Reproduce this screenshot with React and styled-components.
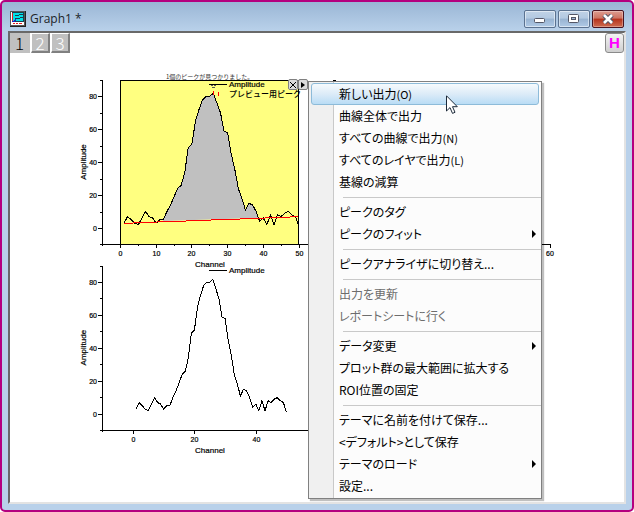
import React from 'react';
import styled, { createGlobalStyle, css } from 'styled-components';

const counts = [
    3, 7, 5, 3, 2, 6, 10, 7, 6, 3, 5, 5, 10, 14, 19, 24, 26, 34, 49, 51,
    65, 72, 78, 80, 80, 82, 76, 70, 59, 58, 45, 36, 24, 18, 11, 15, 14, 10, 4, 6,
    2, 8, 2, 8, 7, 9, 10, 8, 7, 1
];

const menuGroups = [
    [
        { label: '新しい出力', hotkey: 'O', active: true },
        { label: '曲線全体で出力' },
        { label: 'すべての曲線で出力', hotkey: 'N' },
        { label: 'すべてのレイヤで出力', hotkey: 'L' },
        { label: '基線の減算' }
    ],
    [
        { label: 'ピークのタグ' },
        { label: 'ピークのフィット', submenu: true }
    ],
    [{ label: 'ピークアナライザに切り替え...' }],
    [
        { label: '出力を更新', disabled: true },
        { label: 'レポートシートに行く', disabled: true }
    ],
    [
        { label: 'データ変更', submenu: true },
        { label: 'プロット群の最大範囲に拡大する' },
        { label: 'ROI位置の固定' }
    ],
    [
        { label: 'テーマに名前を付けて保存...' },
        { label: '<デフォルト>として保存' },
        { label: 'テーマのロード', submenu: true },
        { label: '設定...' }
    ]
];

const yTicks = [-10, 0, 10, 20, 30, 40, 50, 60, 70, 80, 90];

const Axes = ({ x0, y0, xStep, right, xTicks }) => {
    const bottom = Math.round(y0 + 16.4);
    const top = Math.round(y0 - 9 * 16.45);
    return (
        <g>
            <Stroke d={`M102.5 ${top}V${bottom + 0.5}M102 ${bottom + 0.5}H${right}`} />
            {yTicks.map(v => {
                const y = Math.round(y0 - v * 1.645) + 0.5;
                const major = v % 20 === 0;
                return (
                    <g key={v}>
                        <Stroke d={`M${major ? 98 : 100} ${y}H102`} />
                        {major && <TickText x="97" y={y + 2} textAnchor="end">{v}</TickText>}
                    </g>
                );
            })}
            {xTicks.map(([v, label]) => {
                const x = Math.round(x0 + v * xStep) + 0.5;
                return (
                    <g key={v}>
                        <Stroke d={`M${x} ${bottom}v${label ? 4 : 2}`} />
                        {label && <TickText x={x} y={bottom + 12} textAnchor="middle">{v}</TickText>}
                    </g>
                );
            })}
            <PlotText x="210" y={y0 + 39} textAnchor="middle">Channel</PlotText>
            <PlotText textAnchor="middle" transform={`translate(86 ${y0 - 66}) rotate(-90)`}>Amplitude</PlotText>
        </g>
    );
};

const Plots = () => {
    const curve = (x0, y0, xStep) =>
        counts.map((v, i) => `${(x0 + (i + 1) * xStep).toFixed(1)},${(y0 - v * 1.645).toFixed(1)}`);
    const upper = curve(120.5, 228, 3.57);
    const lower = curve(133, 414, 3.07);

    return (
        <PlotArea viewBox="10 53 612 440" role="img" aria-label="Amplitude / Channel">
            <rect x="120" y="80" width="179" height="164" fill="#ffff80" />
            <polygon points={`163,221 ${upper.slice(11, 39).join(' ')} 259,218`} fill="#c0c0c0" />
            <Stroke d="M120.5 244V80.5H298.5V244" />
            <Curve points={upper.join(' ')} />
            <Stroke $color="#ff0000" d="M124 223.5H133M133 222.5H157M157 221.5H186M186 220.5H211M211 219.5H240M240 218.5H265M265 217.5H290M290 216.5H298" />
            <Axes
                x0={120} y0={228} xStep={3.57} right={308}
                xTicks={[[-5], [0, 1], [5], [10, 1], [15], [20, 1], [25], [30, 1], [35], [40, 1], [45], [50, 1]]}
            />
            <Stroke d="M541 244.5H551M550.5 244V248M333 80.5H336" />
            <TickText x="550" y="256" textAnchor="middle">60</TickText>
            <NoteText x="166" y="79">1個のピークが見つかりました。</NoteText>
            <Stroke d="M209 84.5H227" />
            <PlotText x="229" y="87">Amplitude</PlotText>
            <Stroke $color="#555555" d="M211 85.5H213M214 85.5H216M212 87.5H215" />
            <Stroke $color="#ff0000" d="M213.5 91V95M218.5 92V96" />
            <LegendText x="229" y="97">プレビュー用ピーク</LegendText>

            <Curve points={lower.join(' ')} />
            <Axes
                x0={133} y0={413.6} xStep={3.07} right={308}
                xTicks={[[-10], [0, 1], [20, 1], [40, 1]]}
            />
            <Stroke d="M209 270.5H227" />
            <PlotText x="229" y="273">Amplitude</PlotText>
        </PlotArea>
    );
};

const ContextMenu = () => (
    <Menu role="menu">
        {menuGroups.map((group, i) => (
            <React.Fragment key={i}>
                {i > 0 && <Separator role="separator" />}
                {group.map(item => (
                    <MenuItem key={item.label} type="button" role="menuitem" disabled={item.disabled} $active={item.active}>
                        <span>
                            {item.label}
                            {item.hotkey && <Hotkey>({item.hotkey})</Hotkey>}
                        </span>
                        {item.submenu && (
                            <svg width="4" height="8" viewBox="0 0 4 8"><path d="M0 0L4 4L0 8Z" fill="#000" /></svg>
                        )}
                    </MenuItem>
                ))}
            </React.Fragment>
        ))}
    </Menu>
);

const App = () => (
    <>
        <GlobalStyle />
        <Window>
            <TitleBar>
                <svg width="16" height="16" viewBox="0 0 16 16" shapeRendering="crispEdges">
                    <rect width="16" height="16" fill="#222" />
                    <rect x="0" y="0" width="15" height="15" fill="#555" />
                    <rect x="1" y="1" width="13" height="13" fill="#fff" />
                    <rect x="3" y="2" width="10" height="8" fill="#00e0e8" />
                    <path d="M2 1.5H13.5V10.5H3M5 4.5h3l2-1h3M5 7.5h4l2-1h2" stroke="#1a3f50" fill="none" />
                    <path d="M2.5 2V10M3 12.5h2M6 12.5h2M9 12.5h3" stroke="#e02020" />
                    <path d="M2 10.5h2l2-2" stroke="#2020c0" fill="none" />
                </svg>
                <Title>Graph1 *</Title>
                <WindowButton type="button" aria-label="最小化">
                    <svg width="12" height="12" viewBox="0 0 12 12"><rect x="0.5" y="5.5" width="10" height="4" rx="1" fill="#fff" stroke="#535666" /></svg>
                </WindowButton>
                <WindowButton type="button" aria-label="最大化">
                    <svg width="12" height="12" viewBox="0 0 12 12">
                        <rect x="0.5" y="1.5" width="10" height="8" rx="1" fill="#fff" stroke="#535666" />
                        <rect x="3.5" y="4.5" width="4" height="2" fill="#9cb5d2" stroke="#535666" />
                    </svg>
                </WindowButton>
                <WindowButton type="button" aria-label="閉じる" $close>
                    <svg width="12" height="10" viewBox="0 0 12 10">
                        <path d="M2 1L10 9M10 1L2 9" stroke="#535666" strokeWidth="4.6" />
                        <path d="M2 1L10 9M10 1L2 9" stroke="#fff" strokeWidth="2.6" />
                    </svg>
                </WindowButton>
            </TitleBar>
            <Client>
                <Toolbar>
                    <LayerButton type="button" $current>1</LayerButton>
                    <LayerButton type="button">2</LayerButton>
                    <LayerButton type="button">3</LayerButton>
                    <HideButton type="button">H</HideButton>
                </Toolbar>
                <Plots />
                <RoiTools>
                    <RoiButton type="button" aria-label="閉じる">
                        <svg width="8" height="8" viewBox="0 0 8 8"><path d="M1 1L7 7M7 1L1 7" stroke="#000" /></svg>
                    </RoiButton>
                    <RoiButton type="button" aria-label="メニュー">
                        <svg width="8" height="8" viewBox="0 0 8 8"><path d="M2 1L6 4L2 7Z" fill="#000" /></svg>
                    </RoiButton>
                </RoiTools>
                <ContextMenu />
                <Pointer width="12" height="20" viewBox="0 0 12 20">
                    <path d="M0.5 0.8V16L4 12.6L6.5 18.4L9 17.3L6.5 11.7H11.3Z" fill="#fff" stroke="#1d2a3a" />
                </Pointer>
            </Client>
        </Window>
    </>
);

const GlobalStyle = createGlobalStyle`
    * {
        box-sizing: border-box;
    }

    body {
        margin: 0;
        background: #FFFFFF;
        font-family: "Open Sans", "Noto Sans CJK JP", sans-serif;
    }

    button {
        padding: 0;
        border: none;
        font-family: inherit;
    }
`;

const Window = styled.div`
    min-height: 100vh;
    padding: 0 6px 6px;
    display: flex;
    flex-direction: column;
    background: linear-gradient(#9AB6D5 0, #B9D1EA 29px, #B9D1EA 100%);
    border: 2px solid #B4007F;
    border-radius: 5px;
`;

const TitleBar = styled.header`
    height: 29px;
    padding: 5px 2px 0;
    display: flex;
    align-items: center;
    gap: 2px;
`;

const Title = styled.h1`
    flex: 1;
    margin: 0;
    padding-left: 2px;
    font-weight: normal;
    font-size: 12px;
    line-height: 16px;
    color: #202428;
`;

const WindowButton = styled.button`
    width: 32px;
    height: 18px;
    display: flex;
    align-items: center;
    justify-content: center;
    border: 1px solid #5B7290;
    border-radius: 2px;
    box-shadow: inset 0 0 0 1px rgba(255, 255, 255, 0.5);
    background: linear-gradient(#C0D2E6 0, #B3C9E1 45%, #98B3D1 50%, #B0CAE6 100%);

    ${props => props.$close && css`
        border-color: #4A1420;
        box-shadow: inset 0 0 0 1px rgba(255, 255, 255, 0.3);
        background: linear-gradient(#DD9C90 0, #CE7362 45%, #B5321C 50%, #CD6B50 100%);
    `}
`;

const Client = styled.main`
    position: relative;
    flex: 1;
    background: #FFFFFF;
    border: 2px solid;
    border-color: #696969 #E3E3E3 #E3E3E3 #696969;
`;

const Toolbar = styled.nav`
    height: 20px;
    display: flex;
    gap: 1px;
`;

const LayerButton = styled.button`
    width: 19px;
    height: 20px;
    font-family: "Noto Sans CJK JP", sans-serif;
    font-weight: 300;
    font-size: 17px;
    line-height: 16px;
    color: #FFFFFF;
    background: #C0C0C0;
    border: solid;
    border-width: 1px 2px 2px 1px;
    border-color: #FFFFFF #808080 #808080 #FFFFFF;

    ${props => props.$current && css`
        width: 20px;
        color: #000000;
        border-color: #C0C0C0;
    `}
`;

const HideButton = styled.button`
    width: 19px;
    height: 20px;
    margin-left: auto;
    font-family: "Liberation Sans", sans-serif;
    font-weight: bold;
    font-size: 15px;
    line-height: 18px;
    color: #FF00FF;
    background: linear-gradient(#F4F4F4, #CFCFCF);
    border: 1px solid #8A8A8A;
    border-radius: 3px;
`;

const PlotArea = styled.svg`
    display: block;
    width: 612px;
    height: 440px;
`;

const Stroke = styled.path`
    fill: none;
    stroke: ${props => props.$color || '#000000'};
    shape-rendering: crispEdges;
`;

const Curve = styled.polyline`
    fill: none;
    stroke: #000000;
    shape-rendering: crispEdges;
`;

const PlotText = styled.text`
    font-family: "Liberation Sans", sans-serif;
    font-size: 8px;
    stroke: #000000;
    stroke-width: 0.2px;
`;

const TickText = styled(PlotText)`
    font-size: 7px;
`;

const NoteText = styled.text`
    font-family: "Noto Sans CJK JP", sans-serif;
    font-size: 6px;
    fill: #333333;
`;

const LegendText = styled.text`
    font-family: "Noto Sans CJK JP", sans-serif;
    font-size: 8px;
    font-weight: 500;
`;

/* floats over the top right corner of the highlighted region */
const RoiTools = styled.div`
    position: absolute;
    top: 46px;
    left: 278px;
    display: flex;
`;

const RoiButton = styled.button`
    width: 10px;
    height: 11px;
    display: flex;
    align-items: center;
    justify-content: center;
    background: #DCDCDC;
    border: 1px solid #808080;
    border-radius: 2px;
`;

const Menu = styled.div`
    position: absolute;
    top: 48px;
    left: 298px;
    width: 234px;
    padding: 1px 0;
    display: flex;
    flex-direction: column;
    background: linear-gradient(90deg, #F0F0F0 24px, #C9C9C9 24px, #C9C9C9 25px, #FCFCFC 25px);
    border: 1px solid #808080;
    box-shadow: 2px 2px 1px rgba(0, 0, 0, 0.25);
`;

const MenuItem = styled.button`
    height: 22px;
    margin: 0 2px;
    padding: 0 2px 0 27px;
    display: flex;
    align-items: center;
    justify-content: space-between;
    font-family: "Noto Sans CJK JP", sans-serif;
    font-size: 12px;
    line-height: 18px;
    font-feature-settings: "palt";
    text-align: left;
    white-space: nowrap;
    color: #000000;
    background: transparent;
    border: 1px solid transparent;
    border-radius: 3px;

    &:disabled {
        color: #6D6D6D;
    }

    ${props => props.$active && css`
        border-color: #8DBBD9;
        background: linear-gradient(#F6FAFD, #DCEBF8 50%, #B9DCF5);
    `}
`;

const Hotkey = styled.span`
    font-size: 11px;
`;

const Separator = styled.div`
    height: 8px;
    margin-left: 34px;
    background: linear-gradient(#C9C9C9, #C9C9C9) 0 4px / 100% 1px no-repeat;
`;

const Pointer = styled.svg`
    position: absolute;
    top: 62px;
    left: 436px;
`;

export default App;
